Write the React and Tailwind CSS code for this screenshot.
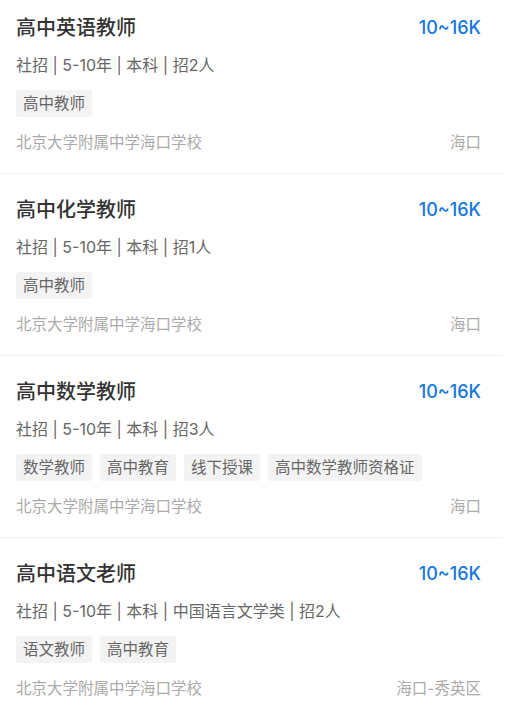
const JOBS = [
  {
    title: '高中英语教师',
    salary: '10~16K',
    meta: '社招 | 5-10年 | 本科 | 招2人',
    tags: ['高中教师'],
    company: '北京大学附属中学海口学校',
    city: '海口',
  },
  {
    title: '高中化学教师',
    salary: '10~16K',
    meta: '社招 | 5-10年 | 本科 | 招1人',
    tags: ['高中教师'],
    company: '北京大学附属中学海口学校',
    city: '海口',
  },
  {
    title: '高中数学教师',
    salary: '10~16K',
    meta: '社招 | 5-10年 | 本科 | 招3人',
    tags: ['数学教师', '高中教育', '线下授课', '高中数学教师资格证'],
    company: '北京大学附属中学海口学校',
    city: '海口',
  },
  {
    title: '高中语文老师',
    salary: '10~16K',
    meta: '社招 | 5-10年 | 本科 | 中国语言文学类 | 招2人',
    tags: ['语文教师', '高中教育'],
    company: '北京大学附属中学海口学校',
    city: '海口-秀英区',
  },
];

function JobCard({ job, first }) {
  return (
    <div
      className={`flex flex-col pl-4 pr-[22px] pb-[20px] ${first ? 'pt-[14px]' : 'pt-[22px] border-t border-[#eeeeee]'}`}
    >
      {/* 标题 + 薪资 */}
      <div className="flex items-center justify-between h-[28px]">
        <span className="text-[20px] font-medium text-[#333333] leading-[28px]">{job.title}</span>
        <span className="text-[18px] font-medium text-[#1677e0] leading-[28px]">{job.salary}</span>
      </div>

      {/* 要求 */}
      <div className="mt-[12px] text-[16px] leading-[22px] text-[#666666]">{job.meta}</div>

      {/* 标签 */}
      <div className="mt-[14px] flex gap-[8px]">
        {job.tags.map(tag => (
          <span
            key={tag}
            className="h-[27px] px-[7px] rounded-[3px] bg-[#f3f3f3] text-[15.5px] leading-[27px] text-[#666666]"
          >
            {tag}
          </span>
        ))}
      </div>

      {/* 学校 + 城市 */}
      <div className="mt-[16px] flex items-center justify-between text-[15.5px] leading-[20px] text-[#aaaaaa]">
        <span>{job.company}</span>
        <span>{job.city}</span>
      </div>
    </div>
  );
}

export default function App() {
  return (
    <div
      className="w-[510px] h-[715px] bg-white overflow-hidden"
      style={{ fontFamily: 'Inter, "Noto Sans CJK SC", sans-serif' }}
    >
      <div className="w-[503px]">
        {JOBS.map((job, i) => (
          <JobCard key={job.title} job={job} first={i === 0} />
        ))}
      </div>
    </div>
  );
}
